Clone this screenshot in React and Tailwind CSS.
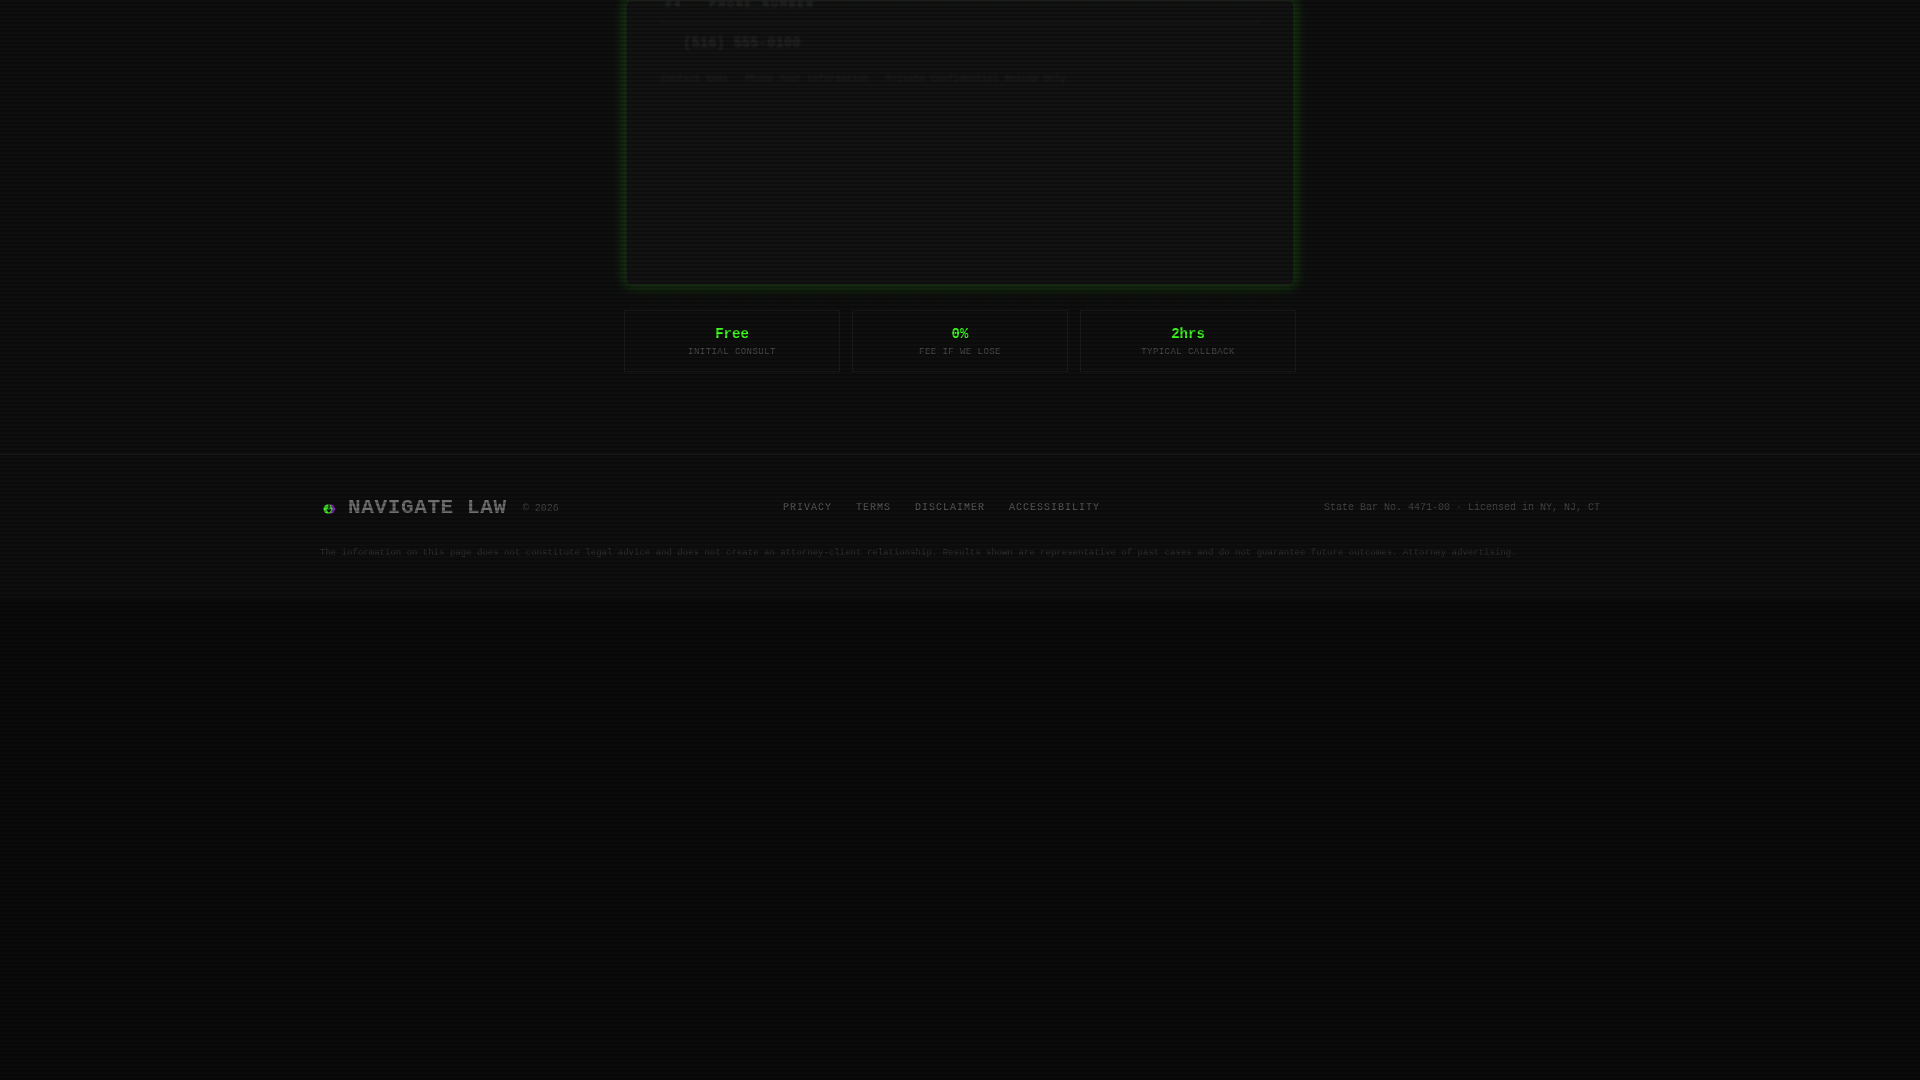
export default function App() {
  const stats = [
    ["Free", "INITIAL CONSULT"],
    ["0%", "FEE IF WE LOSE"],
    ["2hrs", "TYPICAL CALLBACK"],
  ];
  return (
    <div className="relative h-screen overflow-hidden bg-[#090909] font-['Liberation_Mono',monospace]">
      <div className="bg-[#0e0e0e] h-[600px] blur-[0.35px]">
        <main className="w-[672px] mx-auto h-[454px]">
          <section className="mx-[2px] h-[285px] rounded-[6px] border border-[#1a1f1a] bg-[#121212] shadow-[0_0_12px_3px_rgba(57,255,20,0.2)] px-[34px] overflow-hidden">
            <div className="blur-[0.8px]">
              <div className="flex gap-[27px] text-[11px] tracking-[0.2em] text-[#363636] h-[7px] leading-[7px] pl-[4px]">
                <span>#4</span>
                <span>PHONE_NUMBER</span>
              </div>
              <div className="mt-[14px] border-b border-[#1c1c1c] h-px w-[600px]" />
              <div className="mt-[10px] pl-[22px] text-sm font-bold text-[#282828]">(516) 555-0100</div>
              <div className="mt-[20px] text-[9px] tracking-[0.025em] text-[#262626]">Contact Name · Phone Your Information · Private Confidential Review Only</div>
            </div>
          </section>
          <div className="grid grid-cols-3 gap-3 mt-[25px]">
            {stats.map(([v, l]) => (
              <div key={l} className="h-[62px] border border-[#1c1c1c] bg-[#0e0e0e] flex flex-col items-center pt-[14px]">
                <div className="text-sm font-bold text-[#3dff1e] leading-[18px]">{v}</div>
                <div className="mt-[3px] text-[9px] tracking-[0.05em] text-[#4a4a4a] leading-[12px]">{l}</div>
              </div>
            ))}
          </div>
        </main>
        <footer className="border-t border-[#1e1e1e] h-[146px]">
          <div className="w-[1280px] mx-auto pt-[39px]">
            <div className="relative flex items-center justify-between h-[28px]">
              <div className="flex items-center">
                <svg width="20" height="20" viewBox="0 0 20 20" className="ml-[-1px] mr-[9px] mt-[2px]">
                  <circle cx="11.5" cy="10" r="4.5" fill="#8a22c0" />
                  <circle cx="9" cy="10" r="4.5" fill="#46e62c" />
                  <path d="M10 5.5v6.5M8 10l2 3 2-3" stroke="#0b0b0b" strokeWidth="1.2" fill="none" />
                </svg>
                <span className="text-[21px] tracking-[0.03em] font-bold text-[#707070] leading-7">NAVIGATE LAW</span>
                <span className="ml-[16px] text-[10px] text-[#444444]">© 2026</span>
              </div>
              <nav className="flex gap-6 text-[10px] tracking-[0.1em] text-[#5c5c5c] absolute left-[463px] top-[6px]">
                <span>PRIVACY</span>
                <span>TERMS</span>
                <span>DISCLAIMER</span>
                <span>ACCESSIBILITY</span>
              </nav>
              <div className="text-[10px] text-[#464646] -mt-[1px]">State Bar No. 4471-00 · Licensed in NY, NJ, CT</div>
            </div>
            <p className="mt-[25px] text-[9px] tracking-[0.0015em] text-[#303030]">The information on this page does not constitute legal advice and does not create an attorney-client relationship. Results shown are representative of past cases and do not guarantee future outcomes. Attorney advertising.</p>
          </div>
        </footer>
      </div>
      <div className="absolute inset-0 pointer-events-none bg-[linear-gradient(rgba(18,16,16,0)_50%,rgba(0,0,0,0.25)_50%),linear-gradient(90deg,rgba(255,0,0,0.015),rgba(0,255,0,0.008),rgba(0,0,255,0.015))] bg-[length:100%_4px,3px_100%]" />
    </div>
  );
}
